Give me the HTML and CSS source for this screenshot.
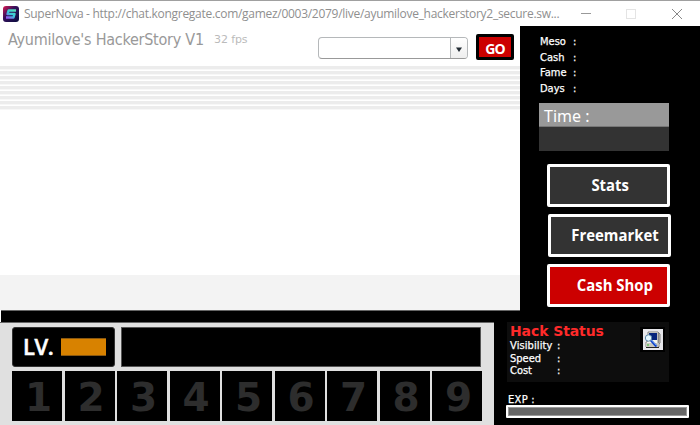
FILE: index.html
```html
<!DOCTYPE html>
<html lang="en">
<head>
<meta charset="utf-8">
<title>SuperNova</title>
<link rel="stylesheet" href="styles.css">
</head>
<body>
<header class="titlebar">
  <svg class="logo" width="16" height="16" viewBox="0 0 16 16">
    <defs>
      <linearGradient id="bg" x1="0" y1="0" x2="1" y2="1"><stop offset="0" stop-color="#e01850"/><stop offset=".4" stop-color="#35105c"/><stop offset="1" stop-color="#080c3c"/></linearGradient>
      <linearGradient id="s" x1="0" y1="1" x2="1" y2="0"><stop offset="0" stop-color="#9a50f0"/><stop offset=".5" stop-color="#38c8d8"/><stop offset="1" stop-color="#58e0b8"/></linearGradient>
    </defs>
    <rect width="16" height="16" rx="3" fill="url(#bg)"/>
    <path d="M13 4.500H5.600L4.500 8h7l-1 3.500H3" fill="none" stroke="url(#s)" stroke-width="2.400" stroke-linejoin="round"/>
  </svg>
  <span class="caption">SuperNova - http://chat.kongregate.com/gamez/0003/2079/live/ayumilove_hackerstory2_secure.sw...</span>
  <svg class="controls" width="110" height="12" viewBox="0 0 110 12">
    <path d="M0 5.500h10" stroke="#999"/>
    <rect x="45.500" y="1.500" width="9" height="9" fill="none" stroke="#e4e4e4"/>
    <path d="M91 1l10 10M101 1L91 11" stroke="#888"/>
  </svg>
</header>
<main class="upper">
  <section class="stage">
    <div class="top">
      <h1>Ayumilove's HackerStory V1</h1>
      <span class="fps">32 fps</span>
      <div class="combo"><div class="arrow"><svg width="6" height="5" viewBox="0 0 6 5"><path d="M0 .5h6L3 5z" fill="#222b33"/></svg></div></div>
      <button class="go"><span>GO</span></button>
    </div>
    <div class="stripes"></div>
    <div class="canvas"></div>
    <div class="floor"></div>
    <div class="bar"></div>
  </section>
  <aside class="side">
    <dl class="info">
      <dt>Meso</dt><dd>:</dd><dt>Cash</dt><dd>:</dd><dt>Fame</dt><dd>:</dd><dt>Days</dt><dd>:</dd>
    </dl>
    <div class="time"><div class="time-head"><span>Time :</span></div></div>
    <button class="menu stats"><span>Stats</span></button>
    <button class="menu market"><span>Freemarket</span></button>
    <button class="menu shop"><span>Cash Shop</span></button>
  </aside>
</main>
<footer class="lower">
  <section class="hud">
    <div class="row">
      <div class="level"><span>LV.</span><i></i></div>
      <div class="message"></div>
    </div>
    <div class="slots">
      <b>1</b><b>2</b><b>3</b><b>4</b><b>5</b><b>6</b><b>7</b><b>8</b><b>9</b>
    </div>
  </section>
  <section class="status">
    <div class="hack">
      <div>
        <h2>Hack Status</h2>
        <dl><dt class="vis">Visibility</dt><dd>:</dd><dt>Speed</dt><dd>:</dd><dt>Cost</dt><dd>:</dd></dl>
      </div>
      <div class="scan">
        <svg width="20" height="21" viewBox="0 0 20 21">
          <rect width="20" height="21" fill="#e6e6ea"/>
          <path d="M5 3h10l2 2v9l-1 1v3H3v-5l2-1z" fill="#f4f4ec" stroke="#555" stroke-width=".7"/>
          <path d="M14.500 4h2v10l-2 1z" fill="#888"/>
          <path d="M6 4h8v7H6z" fill="#06247c"/>
          <path d="M3 14h12v4H3z" fill="#c8c8c0"/>
          <circle cx="5.500" cy="9" r="3.200" fill="#e4f6ff" stroke="#5c88a8"/>
          <path d="M8 11.500l5.500 6" stroke="#1244cc" stroke-width="2.300"/>
          <path d="M8.500 11l5 5.500" stroke="#8fc8ff" stroke-width=".7"/>
          <path d="M4 16h2" stroke="#30c030"/>
          <path d="M3 18.500h13" stroke="#222"/>
        </svg>
      </div>
    </div>
    <div class="exp">EXP :</div>
    <div class="exp-bar"></div>
  </section>
</footer>
</body>
</html>
```
FILE: styles.css
```css
* { box-sizing: border-box; margin: 0; padding: 0; }
body { width: 700px; height: 425px; overflow: hidden; background: #000; font-family: "DejaVu Sans Condensed", "DejaVu Sans", sans-serif; display: flex; flex-direction: column; }
span { white-space: nowrap; }
button { border: 0; font: inherit; }
.titlebar { height: 26px; border-top: 1px solid #a0a0a0; background: #fff; display: flex; align-items: center; padding-left: 3px; flex: none; }
.logo { flex: none; }
.caption { font: 12px/16px "Open Sans", sans-serif; color: #8f8f8f; margin-left: 5px; width: 557px; letter-spacing: -0.285px; }
.controls { flex: none; }
.upper { display: flex; height: 296px; flex: none; }
.stage { width: 520px; background: #fff; display: flex; flex-direction: column; }
.top { height: 40px; display: flex; align-items: flex-start; padding-left: 8px; }
h1 { font-size: 16px; line-height: 20px; font-weight: 400; color: #999; width: 206px; margin-top: 4px; white-space: nowrap; letter-spacing: -0.25px; }
.fps { font-family: "DejaVu Sans", sans-serif; font-size: 11px; line-height: 14px; color: #bbb; margin-top: 7px; width: 104px; letter-spacing: -0.1px; }
.combo { width: 150px; height: 22px; margin-top: 11px; border: 1px solid #b5b8ba; border-bottom-color: #999; border-radius: 4px; display: flex; justify-content: flex-end; }
.arrow { width: 17px; border-left: 1px solid #b5b8ba; border-radius: 0 3px 3px 0; background: linear-gradient(#fff, #eee); display: flex; align-items: center; justify-content: center; padding-top: 2px; }
.go { width: 38px; height: 26px; margin: 8px 0 0 8px; border: 3px solid #000; border-radius: 2px; background: #c00; color: #fff; font: bold 14px/20px "Open Sans", sans-serif; display: flex; justify-content: center; padding-top: 2px; letter-spacing: -0.8px; }
.stripes { height: 44px; background: repeating-linear-gradient(#ececec 0 3px, #f7f7f7 3px 4px, #fff 4px 5px); }
.canvas { height: 165px; }
.floor { height: 35px; background: #f3f3f3; }
.bar { height: 12px; margin-left: 1px; background: #000; border-top: 1px solid #666; }
.side { width: 180px; color: #fff; padding: 8px 0 0 19px; }
.info { display: grid; grid-template-columns: 33px 10px; grid-auto-rows: 15.700px; font-size: 11px; line-height: 16px; padding-left: 1px; height: 69px; -webkit-text-stroke: 0.25px #fff; }
.time { width: 130px; height: 48px; background: #333; }
.time-head { height: 24px; background: #999; border-bottom: 1px solid #777; padding-left: 5px; font: 16px/26px "Noto Sans", sans-serif; }
.menu { display: flex; justify-content: center; width: 123px; height: 43px; border: 3px solid #fff; border-radius: 2px; background: #333; color: #fff; font: bold 16px/37px "Open Sans", sans-serif; }
.menu span { transform: scaleX(0.93); }
.stats { margin: 13px 0 0 8px; padding-left: 3px; }
.market { margin: 7px 0 0 9px; padding-left: 11px; }
.shop { margin: 7px 0 0 8px; background: #c00; padding-left: 13px; }
.lower { display: flex; height: 103px; flex: none; }
.hud { width: 494px; background: #e0e0e0; border-top: 1px solid #666; padding: 4px 0 0 12px; }
.row { display: flex; gap: 6px; height: 41px; }
.level { width: 103px; height: 40px; background: #000; border-radius: 3px; display: flex; align-items: center; padding-left: 10px; color: #fff; font: 600 22px/36px "Open Sans", sans-serif; border: 1px solid #333; }
.level span { width: 38px; margin-top: -2px; letter-spacing: -0.5px; -webkit-text-stroke: 0.5px #fff; }
.level i { width: 45px; height: 18px; background: #d88200; border-top: 1px solid #8a5810; border-bottom: 1px solid #8a5810; }
.message { width: 360px; height: 40px; background: #000; border: 1px solid #555; }
.slots { display: grid; grid-template-columns: repeat(9, 50px); column-gap: 2.500px; margin-top: 3px; }
.slots b { height: 50px; background: #000; color: #2d2d2d; text-align: center; font: bold 39px/54px "DejaVu Sans", sans-serif; padding-left: 3px; }
.status { width: 206px; padding-left: 13px; color: #fff; }
.hack { width: 162px; height: 60px; background: #0d0d0d; display: flex; justify-content: space-between; padding: 0 4px 0 3px; }
h2 { font: bold 14px/18px "DejaVu Sans", sans-serif; color: #ff2a2a; white-space: nowrap; letter-spacing: -0.1px; height: 17px; }
.hack dl { display: grid; grid-template-columns: 47px 10px; grid-auto-rows: 12.500px; font-size: 11px; line-height: 13px; -webkit-text-stroke: 0.25px #fff; }
.vis { letter-spacing: 0.1px; }
.scan { width: 25px; height: 25px; margin-top: 5px; background: #000; display: flex; align-items: center; justify-content: center; }
.exp { font-size: 11px; line-height: 15px; margin-top: 10px; height: 14px; padding-left: 1px; -webkit-text-stroke: 0.25px #fff; letter-spacing: 0.3px; }
.exp-bar { width: 183px; height: 13px; margin: -1px 0 0 -1px; border: 2px solid #fff; border-radius: 1px; background: #666; box-shadow: inset 0 0 0 1px #999; }
```
